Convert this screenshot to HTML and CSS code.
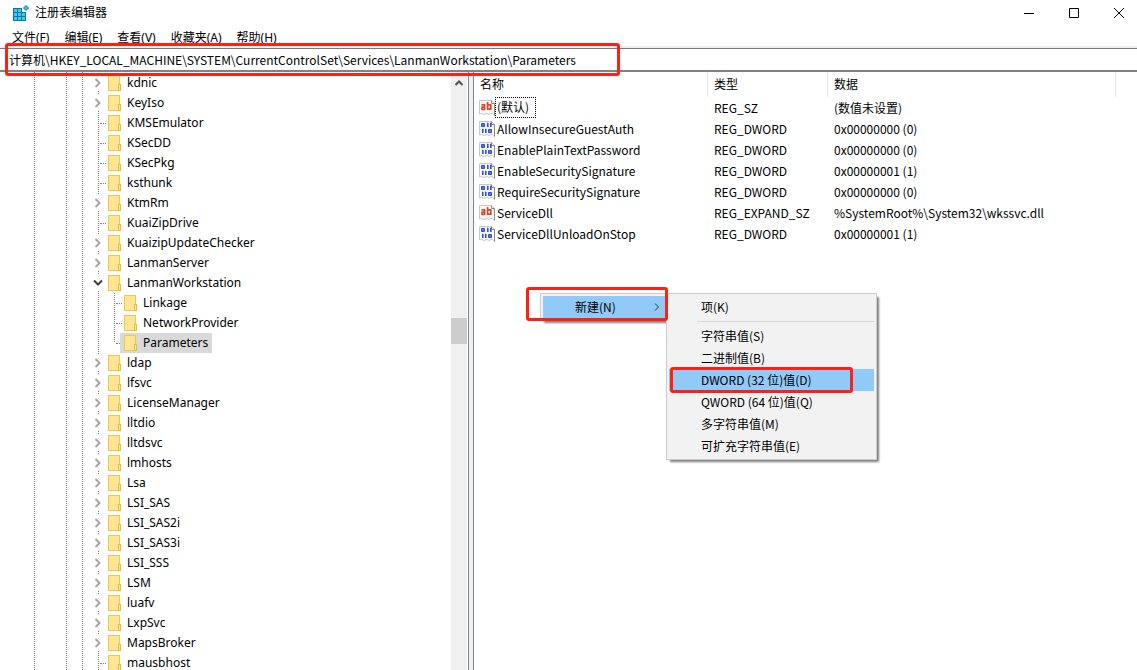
FILE: index.html
```
<!DOCTYPE html>
<html lang="zh-CN">
<head>
    <meta charset="UTF-8">
    <meta name="viewport" content="width=device-width, initial-scale=1.0">
    <title>注册表编辑器</title>
    <link rel="stylesheet" href="styles.css">
</head>
<body>

    <!-- Icon definitions -->
    <svg class="defs" aria-hidden="true">
        <symbol id="folder" viewBox="0 0 13 16">
            <rect x="0.5" y="0.5" width="11" height="15" fill="#ffe694" stroke="#edc84c"/>
            <rect x="10.5" y="9.5" width="2" height="6" fill="#ffe694" stroke="#e5bd3c"/>
        </symbol>
        <symbol id="closed" viewBox="0 0 8 10">
            <path d="M1.5 1 5.5 5 1.5 9" fill="none" stroke="#a6a6a6" stroke-width="2"/>
        </symbol>
        <symbol id="opened" viewBox="0 0 10 8">
            <path d="M1 1.5 5 5.5 9 1.5" fill="none" stroke="#404040" stroke-width="2"/>
        </symbol>
        <symbol id="page" viewBox="0 0 16 16">
            <path d="M.5 .5H12.5L15.5 3.5V15.5L13.5 13.5H12L10 14.5 8 13.5 5 14.5 2.5 13.5 .5 14Z" fill="#f7f7f7" stroke="#c8c8c8"/>
            <path d="M12.5 .5V3.5H15.5V15.5" fill="none" stroke="#8c8c8c"/>
        </symbol>
        <symbol id="string" viewBox="0 0 16 16">
            <use href="#page"/>
            <path d="M2.5 4.8H5.6V10M5.6 7.2H3V9.3H5.6M8.6 2V10M8.6 4.8H11.8V9.2H8.6" fill="none" stroke="#d64c28" stroke-width="1.7" stroke-linejoin="round"/>
        </symbol>
        <symbol id="binary" viewBox="0 0 16 16">
            <use href="#page"/>
            <path d="M2.8 2.8H5.2V5.2H2.8ZM8.8 2V6M11.8 2V6M3.8 8V12M6.8 8V12M9.8 8.8H12.2V11.2H9.8ZM8 2.6H9M11 2.6H12M3 8.6H4M6 8.6H7" fill="none" stroke="#2f53d8" stroke-width="1.6" stroke-linejoin="round"/>
        </symbol>
    </svg>

    <div class="window">
        <header class="titlebar">
            <svg class="app-icon" width="16" height="16" viewBox="0 0 16 16" aria-hidden="true">
                <path d="M0 3H9V7H13V16H0Z" fill="#0b78a8"/>
                <path d="M1 4H4V7H1ZM5 4H8V7H5ZM1 8H4V11H1ZM5 8H8V11H5ZM9 8H12V11H9ZM1 12H4V15H1ZM5 12H8V15H5ZM9 12H12V15H9Z" fill="#40c8f0"/>
                <path d="M13 .5 15.5 3 13 5.5 10.5 3Z" fill="#48bce0" stroke="#0b78a8"/>
            </svg>
            <h1>注册表编辑器</h1>
            <div class="window-buttons">
                <button type="button" aria-label="最小化"><svg width="12" height="12"><path d="M1 6.5H11"/></svg></button>
                <button type="button" aria-label="最大化"><svg width="12" height="12"><path d="M1.5 1.5H10.5V10.5H1.5Z"/></svg></button>
                <button type="button" aria-label="关闭"><svg width="12" height="12"><path d="M1 1 11 11M11 1 1 11"/></svg></button>
            </div>
        </header>

        <nav class="menubar">
            <button type="button">文件(F)</button>
            <button type="button">编辑(E)</button>
            <button type="button">查看(V)</button>
            <button type="button">收藏夹(A)</button>
            <button type="button">帮助(H)</button>
        </nav>

        <div class="address">
            <input type="text" aria-label="地址" value="计算机\HKEY_LOCAL_MACHINE\SYSTEM\CurrentControlSet\Services\LanmanWorkstation\Parameters">
            <span class="mark mark-address"></span>
        </div>

        <main class="content">
            <!-- Key tree -->
            <section class="tree">
                <div class="guides"><i></i><i></i><i></i></div>
                <ul class="keys">
                    <li><button type="button" class="twisty" aria-label="展开"><svg><use href="#closed"/></svg></button><svg class="folder"><use href="#folder"/></svg><span>kdnic</span></li>
                    <li><button type="button" class="twisty" aria-label="展开"><svg><use href="#closed"/></svg></button><svg class="folder"><use href="#folder"/></svg><span>KeyIso</span></li>
                    <li class="leaf"><svg class="folder"><use href="#folder"/></svg><span>KMSEmulator</span></li>
                    <li class="leaf"><svg class="folder"><use href="#folder"/></svg><span>KSecDD</span></li>
                    <li class="leaf"><svg class="folder"><use href="#folder"/></svg><span>KSecPkg</span></li>
                    <li class="leaf"><svg class="folder"><use href="#folder"/></svg><span>ksthunk</span></li>
                    <li><button type="button" class="twisty" aria-label="展开"><svg><use href="#closed"/></svg></button><svg class="folder"><use href="#folder"/></svg><span>KtmRm</span></li>
                    <li class="leaf"><svg class="folder"><use href="#folder"/></svg><span>KuaiZipDrive</span></li>
                    <li><button type="button" class="twisty" aria-label="展开"><svg><use href="#closed"/></svg></button><svg class="folder"><use href="#folder"/></svg><span>KuaizipUpdateChecker</span></li>
                    <li><button type="button" class="twisty" aria-label="展开"><svg><use href="#closed"/></svg></button><svg class="folder"><use href="#folder"/></svg><span>LanmanServer</span></li>
                    <li><button type="button" class="twisty open" aria-label="折叠"><svg><use href="#opened"/></svg></button><svg class="folder"><use href="#folder"/></svg><span>LanmanWorkstation</span></li>
                    <li class="branch">
                        <ul class="subkeys">
                            <li class="leaf"><svg class="folder"><use href="#folder"/></svg><span>Linkage</span></li>
                            <li class="leaf"><svg class="folder"><use href="#folder"/></svg><span>NetworkProvider</span></li>
                            <li class="leaf last"><div class="selected"><svg class="folder"><use href="#folder"/></svg><span>Parameters</span></div></li>
                        </ul>
                    </li>
                    <li><button type="button" class="twisty" aria-label="展开"><svg><use href="#closed"/></svg></button><svg class="folder"><use href="#folder"/></svg><span>ldap</span></li>
                    <li><button type="button" class="twisty" aria-label="展开"><svg><use href="#closed"/></svg></button><svg class="folder"><use href="#folder"/></svg><span>lfsvc</span></li>
                    <li><button type="button" class="twisty" aria-label="展开"><svg><use href="#closed"/></svg></button><svg class="folder"><use href="#folder"/></svg><span>LicenseManager</span></li>
                    <li><button type="button" class="twisty" aria-label="展开"><svg><use href="#closed"/></svg></button><svg class="folder"><use href="#folder"/></svg><span>lltdio</span></li>
                    <li><button type="button" class="twisty" aria-label="展开"><svg><use href="#closed"/></svg></button><svg class="folder"><use href="#folder"/></svg><span>lltdsvc</span></li>
                    <li><button type="button" class="twisty" aria-label="展开"><svg><use href="#closed"/></svg></button><svg class="folder"><use href="#folder"/></svg><span>lmhosts</span></li>
                    <li><button type="button" class="twisty" aria-label="展开"><svg><use href="#closed"/></svg></button><svg class="folder"><use href="#folder"/></svg><span>Lsa</span></li>
                    <li><button type="button" class="twisty" aria-label="展开"><svg><use href="#closed"/></svg></button><svg class="folder"><use href="#folder"/></svg><span>LSI_SAS</span></li>
                    <li><button type="button" class="twisty" aria-label="展开"><svg><use href="#closed"/></svg></button><svg class="folder"><use href="#folder"/></svg><span>LSI_SAS2i</span></li>
                    <li><button type="button" class="twisty" aria-label="展开"><svg><use href="#closed"/></svg></button><svg class="folder"><use href="#folder"/></svg><span>LSI_SAS3i</span></li>
                    <li><button type="button" class="twisty" aria-label="展开"><svg><use href="#closed"/></svg></button><svg class="folder"><use href="#folder"/></svg><span>LSI_SSS</span></li>
                    <li><button type="button" class="twisty" aria-label="展开"><svg><use href="#closed"/></svg></button><svg class="folder"><use href="#folder"/></svg><span>LSM</span></li>
                    <li><button type="button" class="twisty" aria-label="展开"><svg><use href="#closed"/></svg></button><svg class="folder"><use href="#folder"/></svg><span>luafv</span></li>
                    <li><button type="button" class="twisty" aria-label="展开"><svg><use href="#closed"/></svg></button><svg class="folder"><use href="#folder"/></svg><span>LxpSvc</span></li>
                    <li><button type="button" class="twisty" aria-label="展开"><svg><use href="#closed"/></svg></button><svg class="folder"><use href="#folder"/></svg><span>MapsBroker</span></li>
                    <li class="leaf"><svg class="folder"><use href="#folder"/></svg><span>mausbhost</span></li>
                </ul>
                <div class="scrollbar">
                    <svg width="10" height="6" viewBox="0 0 10 6" aria-hidden="true"><path d="M1.5 5 5 1.5 8.5 5"/></svg>
                    <div class="thumb"></div>
                </div>
            </section>

            <div class="splitter"></div>

            <!-- Values of the selected key -->
            <section class="values">
                <table>
                    <colgroup><col class="col-name"><col class="col-type"><col class="col-data"></colgroup>
                    <thead>
                        <tr><th>名称</th><th>类型</th><th>数据</th></tr>
                    </thead>
                    <tbody>
                        <tr><td><div class="name"><svg><use href="#string"/></svg><span class="focused">(默认)</span></div></td><td>REG_SZ</td><td>(数值未设置)</td></tr>
                        <tr><td><div class="name"><svg><use href="#binary"/></svg><span>AllowInsecureGuestAuth</span></div></td><td>REG_DWORD</td><td>0x00000000 (0)</td></tr>
                        <tr><td><div class="name"><svg><use href="#binary"/></svg><span>EnablePlainTextPassword</span></div></td><td>REG_DWORD</td><td>0x00000000 (0)</td></tr>
                        <tr><td><div class="name"><svg><use href="#binary"/></svg><span>EnableSecuritySignature</span></div></td><td>REG_DWORD</td><td>0x00000001 (1)</td></tr>
                        <tr><td><div class="name"><svg><use href="#binary"/></svg><span>RequireSecuritySignature</span></div></td><td>REG_DWORD</td><td>0x00000000 (0)</td></tr>
                        <tr><td><div class="name"><svg><use href="#string"/></svg><span>ServiceDll</span></div></td><td>REG_EXPAND_SZ</td><td>%SystemRoot%\System32\wkssvc.dll</td></tr>
                        <tr><td><div class="name"><svg><use href="#binary"/></svg><span>ServiceDllUnloadOnStop</span></div></td><td>REG_DWORD</td><td>0x00000001 (1)</td></tr>
                    </tbody>
                </table>

                <!-- Context menu with its submenu -->
                <div class="menu menu-context">
                    <button type="button" class="active">新建(N)<svg width="6" height="8" viewBox="0 0 6 8" aria-hidden="true"><path d="M1 .5 4.5 4 1 7.5"/></svg></button>
                </div>
                <div class="menu menu-new">
                    <button type="button">项(K)</button>
                    <hr>
                    <button type="button">字符串值(S)</button>
                    <button type="button">二进制值(B)</button>
                    <button type="button" class="active">DWORD (32 位)值(D)</button>
                    <button type="button">QWORD (64 位)值(Q)</button>
                    <button type="button">多字符串值(M)</button>
                    <button type="button">可扩充字符串值(E)</button>
                    <span class="mark mark-dword"></span>
                </div>
                <span class="mark mark-new"></span>
            </section>
        </main>
    </div>

</body>
</html>
```

FILE: styles.css
```
* {
    margin: 0;
    padding: 0;
    box-sizing: border-box;
}

body {
    font-family: "Noto Sans", "Noto Sans CJK SC", sans-serif;
    font-size: 12px;
    line-height: 20px;
    color: #000;
    background-color: #fff;
}

button,
input {
    font: inherit;
    color: inherit;
    border: none;
    background: none;
}

ul {
    list-style: none;
}

.defs {
    position: absolute;
    width: 0;
    height: 0;
}

.window {
    display: flex;
    flex-direction: column;
    height: 100vh;
    overflow: hidden;
}

/* Title bar */
.titlebar {
    display: flex;
    align-items: center;
    gap: 6px;
    height: 26px;
    padding-left: 13px;
    flex-shrink: 0;
}

.titlebar h1 {
    font-size: 12px;
    font-weight: normal;
}

.window-buttons {
    display: flex;
    margin-left: auto;
}

.window-buttons button {
    display: flex;
    align-items: center;
    justify-content: center;
    width: 45px;
    height: 24px;
}

.window-buttons button:last-child {
    width: 36px;
    margin-left: 5px;
}

.window-buttons path {
    fill: none;
    stroke: #000;
}

/* Menu bar */
.menubar {
    display: flex;
    gap: 15px;
    height: 20px;
    padding: 2px 12px 0;
    flex-shrink: 0;
}

/* Address bar */
.address {
    position: relative;
    border-top: 2px solid #f0f0f0;
    flex-shrink: 0;
}

.address input {
    display: block;
    width: 100%;
    height: 24px;
    padding-left: 9px;
    border-top: 1px solid #7a7a7a;
    border-bottom: 2px solid #828282;
    outline: none;
    font-family: "Noto Sans CJK SC", sans-serif;
}

.content {
    display: flex;
    flex: 1;
    min-height: 0;
}

/* Key tree */
.tree {
    display: flex;
    width: 468px;
    overflow: hidden;
    flex-shrink: 0;
}

.guides {
    display: flex;
    width: 90px;
    padding-left: 34px;
    flex-shrink: 0;
}

.guides i {
    width: 16px;
    border-left: 1px dotted #808080;
    flex-shrink: 0;
}

.guides i:first-child {
    width: 32px;
}

.guides i:last-child {
    width: 8px;
}

.keys {
    flex: 1;
    padding-top: 1px;
}

.keys li {
    display: flex;
    align-items: center;
    height: 20px;
    background: repeating-linear-gradient(#808080 0 1px, transparent 1px 2px) 8px 0 / 1px 100% no-repeat;
}

.keys .branch {
    height: 60px;
    padding-left: 16px;
}

.keys .last {
    background-size: 1px 10px;
}

.twisty {
    display: flex;
    align-items: center;
    justify-content: center;
    width: 16px;
    height: 16px;
    margin-right: 2px;
    background-color: #fff;
}

.twisty svg {
    width: 8px;
    height: 10px;
}

.twisty.open svg {
    width: 10px;
    height: 8px;
}

.leaf::before {
    content: "";
    width: 6px;
    margin: 0 2px 0 10px;
    border-top: 1px dotted #808080;
}

.folder {
    width: 13px;
    height: 16px;
    margin-right: 6px;
}

.selected {
    display: flex;
    align-items: center;
    height: 20px;
    margin-left: -4px;
    padding: 0 4px;
    background-color: #d9d9d9;
}

.scrollbar {
    display: flex;
    flex-direction: column;
    align-items: center;
    width: 16px;
    margin-right: 1px;
    padding-top: 8px;
    background-color: #f0f0f0;
}

.scrollbar path {
    fill: none;
    stroke: #505050;
    stroke-width: 2;
}

.thumb {
    width: 100%;
    height: 26px;
    margin-top: 232px;
    background-color: #cdcdcd;
}

.splitter {
    width: 6px;
    border: solid #828790;
    border-width: 0 1px;
    background-color: #f0f0f0;
    flex-shrink: 0;
}

/* Value list */
.values {
    position: relative;
    flex: 1;
    min-width: 0;
}

.values table {
    border-collapse: separate;
    border-spacing: 0;
    table-layout: fixed;
    width: 642px;
}

.col-name {
    width: 234px;
}

.col-type {
    width: 120px;
}

.values th {
    height: 25px;
    padding-left: 6px;
    border-right: 1px solid #e5e5e5;
    font-weight: normal;
    text-align: left;
}

.values td {
    height: 21px;
    padding-left: 6px;
    font-family: "Noto Sans CJK SC", sans-serif;
    white-space: nowrap;
}

.values td:first-child {
    padding-left: 5px;
}

.name {
    display: flex;
    align-items: center;
}

.name svg {
    width: 16px;
    height: 16px;
}

.name span {
    padding-left: 2px;
}

.name .focused {
    height: 21px;
    padding-right: 7px;
    outline: 1px dotted #000;
    outline-offset: -1px;
}

/* Popup menus */
.menu {
    position: absolute;
    top: 221px;
    padding: 2px;
    border: 1px solid #ccc;
    background-color: #f2f2f2;
    box-shadow: 3px 3px 2px -1px rgba(0, 0, 0, 0.5);
    font-family: "Noto Sans CJK SC", sans-serif;
}

.menu button {
    display: flex;
    align-items: center;
    justify-content: space-between;
    width: 100%;
    height: 22px;
    padding: 0 5px 0 32px;
    text-align: left;
}

.menu .active {
    background-color: #91c9f7;
}

.menu path {
    fill: none;
    stroke: #333;
}

.menu hr {
    height: 1px;
    margin: 3px 0 3px 28px;
    border: none;
    background-color: #d7d7d7;
}

.menu-context {
    left: 66px;
    width: 128px;
}

.menu-new {
    left: 192px;
    width: 211px;
}

/* Red highlight frames */
.mark {
    position: absolute;
    border: 3px solid #ff2015;
    border-radius: 3px;
    pointer-events: none;
}

.mark-address {
    top: -5px;
    left: 5px;
    width: 615px;
    height: 33px;
}

.mark-new {
    top: 215px;
    left: 52px;
    width: 142px;
    height: 34px;
}

.mark-dword {
    top: 73px;
    left: 3px;
    width: 183px;
    height: 26px;
}
```
